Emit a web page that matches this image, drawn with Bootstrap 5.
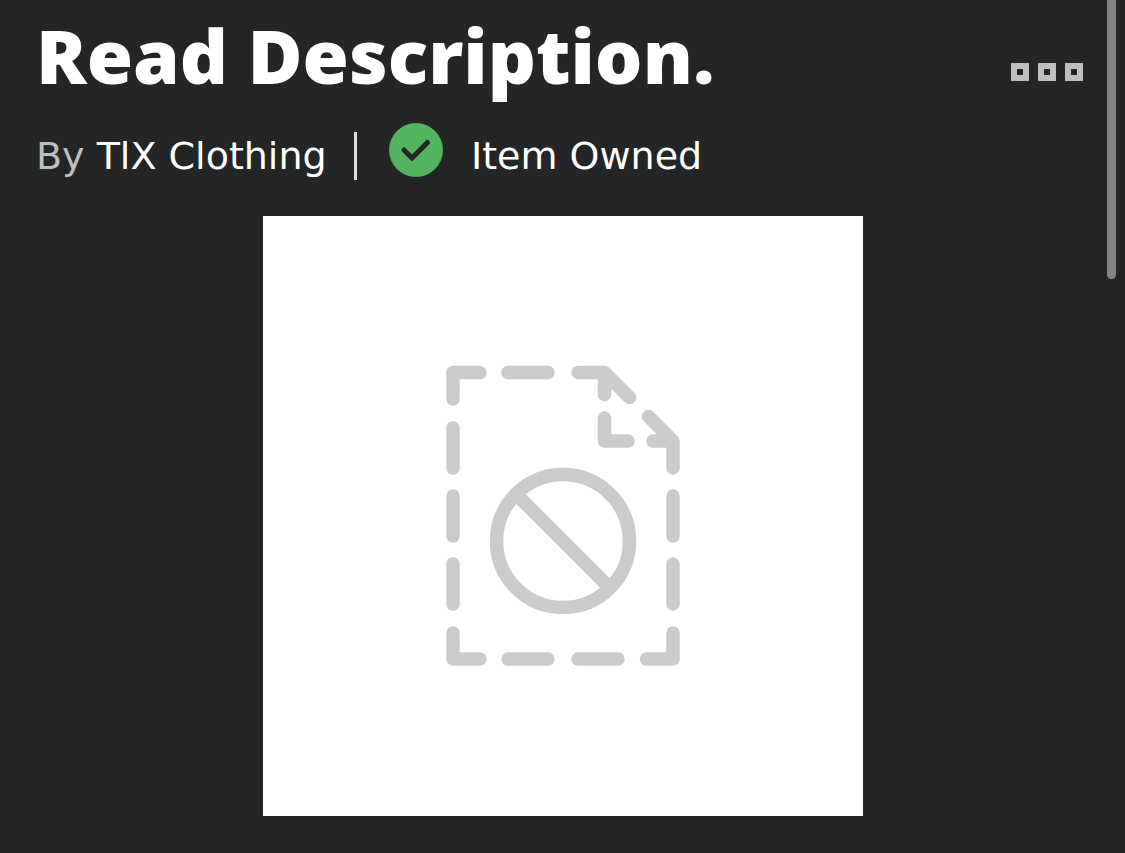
<!DOCTYPE html>
<html lang="en">
<head>
<meta charset="utf-8">
<meta name="viewport" content="width=device-width, initial-scale=1">
<title>Read Description.</title>
<link href="https://cdn.jsdelivr.net/npm/bootstrap@5.3.0/dist/css/bootstrap.min.css" rel="stylesheet">
<style>
  body { background: #232527; color: #fff; font-family: "DejaVu Sans", Inter, sans-serif; }
  .item-page { padding: 15px 36px 36px; }
  .item-title { font-family: "Open Sans", Inter, sans-serif; font-size: 75px; line-height: 80px; font-weight: 800; }
  .item-meta { font-size: 38px; line-height: 48px; margin: 28px 0 36px; }
  .creator { min-width: 296px; }
  .by-label { color: #bdbebe; }
  .creator-link { color: #fff; }
  .meta-divider { width: 3px; height: 48px; background: #e0e1e1; margin: 0 32px 0 22px; }
  .owned-icon { width: 54px; height: 54px; margin: 0 28px 3px 0; }
  .more-btn { padding: 48px 6px 14px; }
  .thumb { width: 600px; max-width: 100%; background: #fff; }
  .scroll-thumb { width: 9px; height: 279px; right: 9px; background: #828384; border-radius: 0 0 5px 5px; }
</style>
</head>
<body class="position-relative">
<main class="item-page">
  <header class="d-flex justify-content-between align-items-start">
    <h1 class="item-title mb-0">Read Description.</h1>
    <button type="button" class="more-btn btn border-0 lh-1 flex-shrink-0" aria-label="More options">
      <svg class="d-block" width="72" height="18" viewBox="0 0 72 18" fill="none" stroke="#bdbebe" stroke-width="6" aria-hidden="true">
        <path d="M3 3h12v12H3zM30 3h12v12H30zM57 3h12v12H57z"/>
      </svg>
    </button>
  </header>
  <div class="item-meta d-flex flex-wrap align-items-end">
    <div class="creator"><span class="by-label">By</span> <a href="#" class="creator-link text-decoration-none">TlX Clothing</a></div>
    <div class="meta-divider"></div>
    <svg class="owned-icon" viewBox="0 0 54 54" aria-hidden="true">
      <circle cx="27" cy="27" r="27" fill="#52b45f"/>
      <path d="M15 27l8 8 15.500-15.500" fill="none" stroke="#232527" stroke-width="5" stroke-linecap="round"/>
    </svg>
    <span>Item Owned</span>
  </div>
  <div class="thumb mx-auto">
    <svg class="d-block w-100" viewBox="0 0 600 600" fill="none" stroke="#cbcbcb" stroke-width="13.500" stroke-linecap="round" stroke-linejoin="round" role="img" aria-label="Content unavailable">
      <path d="M190 183v-26.500h27M245 156.500h40M315 156.500h26.500v22M341.500 156.500l25 25M341.500 202v23H365M390 225h20v27M410 225l-24.500-24.500"/>
      <path d="M190 212v40M190 280v40M190 348v40M190 417v26h27M245 443h40M315 443h40M383.500 443H410v-26M410 280v40M410 348v40"/>
      <circle cx="300" cy="325" r="66.500"/>
      <path d="M253 278l94 94"/>
    </svg>
  </div>
</main>
<div class="scroll-thumb position-absolute top-0"></div>
<script src="https://cdn.jsdelivr.net/npm/bootstrap@5.3.0/dist/js/bootstrap.bundle.min.js"></script>
</body>
</html>
